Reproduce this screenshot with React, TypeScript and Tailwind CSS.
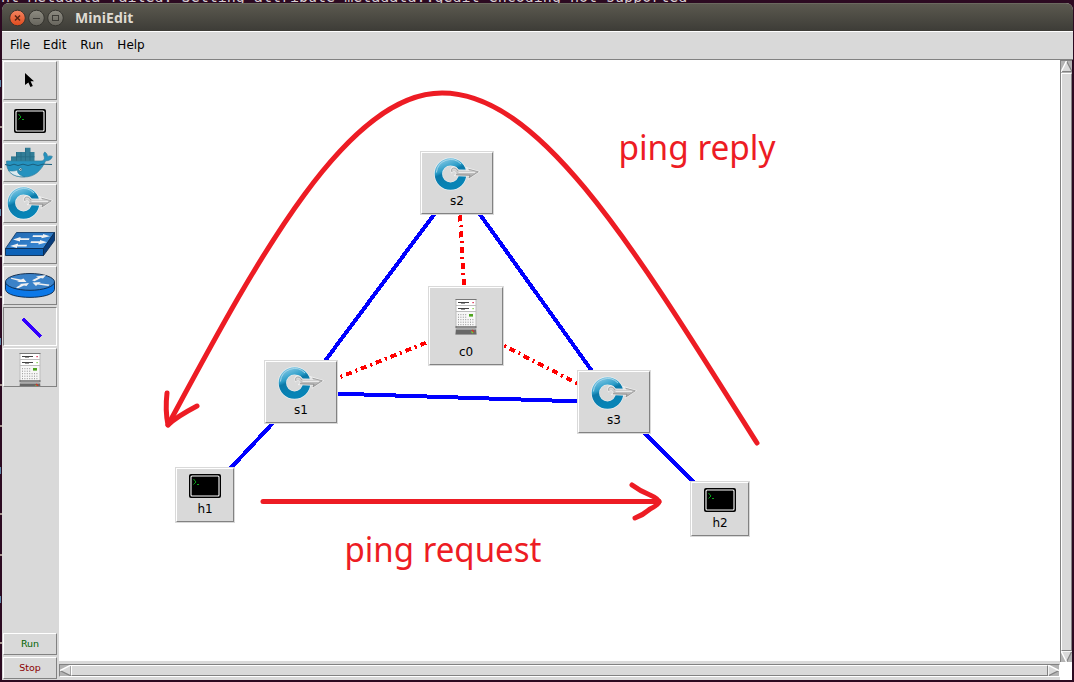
import React from 'react';

const raised = 'border border-t-white border-l-white border-r-[#828282] border-b-[#828282]';
const sunken = 'border border-t-[#828282] border-l-[#828282] border-r-white border-b-white';

function SwitchIcon() {
  return (
    <svg width="46" height="34" viewBox="0 0 46 34" className="block shrink-0">
      <defs>
        <linearGradient id="ring" x1="0" y1="0" x2="0.4" y2="1">
          <stop offset="0" stopColor="#7cc4e2" />
          <stop offset="0.38" stopColor="#2c9dc8" />
          <stop offset="0.5" stopColor="#0b79a9" />
          <stop offset="1" stopColor="#0784b6" />
        </linearGradient>
        <linearGradient id="silver" x1="0" y1="0" x2="0" y2="1">
          <stop offset="0" stopColor="#ececec" />
          <stop offset="0.5" stopColor="#c0c0c0" />
          <stop offset="1" stopColor="#979797" />
        </linearGradient>
      </defs>
      <circle cx="16.5" cy="17" r="12.2" fill="none" stroke="#e9eff1" strokeWidth="8.6" />
      <circle cx="16.5" cy="17" r="12.1" fill="none" stroke="url(#ring)" strokeWidth="7.4" />
      <path d="M2.4 15.5A14.3 14.3 0 0 1 27 7" fill="none" stroke="#a5d6e9" strokeWidth="1" />
      <path d="M17.5 16C14.5 9 21.5 7.5 24.5 13L35 13.2L32 10.5L45.5 14.6L34 22.3L35 19.2L20 18.6C24.5 16.8 20.5 12.5 17.5 16Z" fill="url(#silver)" stroke="#efefef" strokeWidth="1" strokeLinejoin="round" />
      <path d="M17.8 14.8C16.5 10 22 9.8 24 14M34.3 12.2L44.3 14.8L34.9 21L36 18.2L22 17.8" fill="none" stroke="#8c8c8c" strokeWidth="0.7" />
      <path d="M24.5 15.4L41 15.4" stroke="#f4f4f4" strokeWidth="0.9" />
    </svg>
  );
}

function HostIcon() {
  return (
    <svg width="32" height="24" viewBox="0 0 32 24" className="block shrink-0">
      <rect width="32" height="24" rx="2" fill="#000" />
      <rect x="2" y="2" width="28" height="20" rx="1" fill="none" stroke="#fff" strokeWidth="1.1" />
      <path d="M4.5 5L7 8L4.5 10.5M8 10.5H10" fill="none" stroke="#08a318" strokeWidth="1" />
    </svg>
  );
}

const vents = [15, 17.5, 20, 22.5, 25];

function ControllerIcon() {
  return (
    <svg width="22" height="36" viewBox="0 0 22 36" className="block shrink-0">
      <rect x="0.5" y="0" width="21" height="36" fill="#bdbdbd" />
      <path d="M0.5 0.5H21.5" stroke="#777" strokeWidth="1" />
      <rect x="1.5" y="1" width="19" height="5" fill="#fff" />
      <rect x="1.5" y="7" width="19" height="5" fill="#fff" />
      <rect x="1.5" y="13" width="19" height="15" fill="#f7f7f7" />
      <path d="M3 3.5H14M3 9.5H14" stroke="#444" strokeWidth="1" />
      <path d="M6 4.3H10M6 10.3H10" stroke="#444" strokeWidth="0.7" />
      <rect x="17.5" y="3" width="1.2" height="1.2" fill="#d00030" />
      <rect x="17.5" y="9" width="1.2" height="1.2" fill="#68c52d" />
      {vents.map((y) => (
        <path key={y} d={y < 19 ? `M3 ${y + 0.7}H12` : `M3 ${y + 0.7}H19`} stroke="#8f8f8f" strokeWidth="1" strokeDasharray="1 1.4" />
      ))}
      <rect x="14" y="15" width="4" height="2.6" fill="#4ea51f" />
      <path d="M0.5 28H21.5" stroke="#222" strokeWidth="1" />
      <path d="M1 30.5H21L21.5 35H0.5Z" fill="#686868" />
      <rect x="1.5" y="28.5" width="19" height="2" fill="#aaa" />
      <path d="M17 31L19 33" stroke="#d93025" strokeWidth="1.2" />
      <path d="M16.4 32.5L18 34" stroke="#7ccf2e" strokeWidth="1.2" />
      <path d="M0.5 35.5H21.5" stroke="#999" strokeWidth="1" />
    </svg>
  );
}

function CursorIcon() {
  return (
    <svg width="10" height="15" viewBox="0 0 10 15" className="block shrink-0">
      <path d="M0 0L9 8.2H5.6L7.8 13L5.4 14L3.4 9.5L0 12Z" fill="#000" />
    </svg>
  );
}

function DockerIcon() {
  return (
    <svg width="48" height="32" viewBox="0 0 48 32" className="block shrink-0">
      <path d="M6 10H11V5H20V0.8H25.5V5H29.5V14H6Z" fill="#317d97" />
      <path d="M11.5 5V14M16 5V14M20.5 1V14M25 5V14M6 9.8H29.5" stroke="#246a84" strokeWidth="0.8" />
      <path d="M1.5 14H36C39 14 40 12 39.2 9.5C38.4 7.5 38.5 6.5 39.8 5C42 6.5 42.5 8 42.3 9.5C44 8.8 46 8.8 47.3 9.5C46.5 12.5 44 13.8 40.6 13.8C36 24 29.5 30 19 30C8 30 1 25 1.5 14Z" fill="#2592bf" stroke="#2d7e9e" strokeWidth="0.7" />
      <path d="M3.5 23.5C7 24.5 10 24 12.5 23C12 26 14.5 28.5 19.5 29.7C11.5 30.3 6 27.5 3.5 23.5Z" fill="#dceaf0" stroke="#2d7e9e" strokeWidth="0.6" />
      <path d="M0 17.5L5 18.5L9 17.2L13 18.5L18 17.2L23 18.5L28 17.2L33 18.5L38 17.2L47 17.5" fill="none" stroke="#1b5f7c" strokeWidth="1" />
      <circle cx="15.5" cy="22.5" r="1.6" fill="#e6f2f6" stroke="#246d86" strokeWidth="0.7" />
      <circle cx="15.8" cy="22.6" r="0.7" fill="#123c4d" />
    </svg>
  );
}

function LegacySwitchIcon() {
  return (
    <svg width="50" height="24" viewBox="0 0 50 24" className="block shrink-0">
      <defs>
        <linearGradient id="slab" x1="0" y1="0" x2="1" y2="1">
          <stop offset="0" stopColor="#1f66ae" />
          <stop offset="1" stopColor="#3f8fdc" />
        </linearGradient>
      </defs>
      <path d="M11.5 0.5H49.5L38.5 16.5H0.5Z" fill="url(#slab)" stroke="#123c6b" strokeWidth="0.9" />
      <path d="M0.5 16.5H38.5V23.5H0.5Z" fill="#0c62b8" stroke="#0a2c52" strokeWidth="0.9" />
      <path d="M38.5 16.5L49.5 0.5V8.5L38.5 23.5Z" fill="#083c7c" stroke="#0a2c52" strokeWidth="0.9" />
      <path d="M28 3.2H38V1.9L45 4.2L36.5 6.3V4.9H27.5Z" fill="#f1f1f1" />
      <path d="M26 9.3H35V8L42 10.3L33.5 12.4V11H25.5Z" fill="#f1f1f1" />
      <path d="M24.5 6.3H15.5V5L8 7.4L15 9.5V8H24Z" fill="#f1f1f1" />
      <path d="M22 12.8H13V11.5L5 13.9L12 16V14.5H21.5Z" fill="#f1f1f1" />
    </svg>
  );
}

function RouterIcon() {
  return (
    <svg width="50" height="25" viewBox="0 0 50 25" className="block shrink-0">
      <path d="M0.5 9V16.5C2 27 48 27 49.5 16.5V9Z" fill="#0b78e8" stroke="#0a2545" strokeWidth="0.9" />
      <ellipse cx="25" cy="8.9" rx="24.5" ry="8.4" fill="#3b82c8" stroke="#0a2545" strokeWidth="0.9" />
      <path d="M6 4.8L16 6.4L18.5 5.4L21.5 9L12 9.1L14 7.9L6 5.8Z" fill="#f1f1f1" />
      <path d="M27 7.3L33 4.2L30.8 3.4L41 2L38 5.5L35.8 4.9L29.5 8.3Z" fill="#f1f1f1" />
      <path d="M27.5 9.4L36 9L34 10.2L44.5 11.5L43.5 12.9L32.5 11.6L31 13Z" fill="#f1f1f1" />
      <path d="M11 14.5L16 11.5L14 11L24 9.9L21.5 13L19 12.6L13 15.3Z" fill="#f1f1f1" />
    </svg>
  );
}

function LinkIcon() {
  return (
    <svg width="22" height="22" viewBox="0 0 22 22" className="block shrink-0" shapeRendering="crispEdges">
      <path d="M2 2L20 20" stroke="#3300ff" strokeWidth="3.4" />
    </svg>
  );
}

const tools = [
  { name: 'select', pad: 'pl-[21px] pt-[11px]', icon: <CursorIcon /> },
  { name: 'host', pad: 'pl-[10px] pt-[6px]', icon: <HostIcon /> },
  { name: 'docker', pad: 'pl-[1px] pt-[3px]', icon: <DockerIcon /> },
  { name: 'switch', pad: 'pl-[3px] pt-[1px]', icon: <SwitchIcon /> },
  { name: 'legacy-switch', pad: 'pl-[1px] pt-[6px]', icon: <LegacySwitchIcon /> },
  { name: 'legacy-router', pad: 'pl-[1px] pt-[6px]', icon: <RouterIcon /> },
  { name: 'link', pad: 'pl-[17px] pt-[9px]', icon: <LinkIcon />, active: true },
  { name: 'controller', pad: 'pl-[15px] pt-[4px]', icon: <ControllerIcon /> },
];

const nodes = [
  { id: 's2', box: 'left-[361px] top-[91px] h-[64px] w-[74px]', pad: 'pt-[4px]', icon: <SwitchIcon />, label: 'mt-px' },
  { id: 'c0', box: 'left-[369px] top-[226px] h-[80px] w-[76px]', pad: 'pt-[11px]', icon: <ControllerIcon />, label: 'mt-[8px]' },
  { id: 's1', box: 'left-[205px] top-[300px] h-[64px] w-[74px]', pad: 'pt-[4px]', icon: <SwitchIcon />, label: 'mt-px' },
  { id: 's3', box: 'left-[518px] top-[310px] h-[64px] w-[74px]', pad: 'pt-[4px]', icon: <SwitchIcon />, label: 'mt-px' },
  { id: 'h1', box: 'left-[116px] top-[407px] h-[56px] w-[60px]', pad: 'pt-[5px]', icon: <HostIcon />, label: 'mt-[2px]' },
  { id: 'h2', box: 'left-[631px] top-[421px] h-[56px] w-[60px]', pad: 'pt-[5px]', icon: <HostIcon />, label: 'mt-[2px]' },
];

function Topology() {
  return (
    <div className="relative h-[601px] w-[1001px] overflow-hidden bg-white">
      <svg width="1001" height="601" viewBox="59 60 1001 601" className="absolute inset-0" shapeRendering="crispEdges" fill="none">
        <g stroke="#0000ff" strokeWidth="4">
          <path d="M301.5 392.5L457.5 183L614.5 402.5Z" />
          <path d="M301.5 392.5L205.5 495M614.5 402.5L720 509" />
        </g>
        <g stroke="#ff0000" strokeWidth="4" strokeDasharray="6 4 2 4">
          <path d="M458.5 183.5L466 326" />
          <path d="M301.5 392.5L466.5 326.5" />
          <path d="M614.5 402.5L466.5 326.5" />
        </g>
      </svg>
      {nodes.map((n) => (
        <div key={n.id} className={`absolute bg-[#d9d9d9] p-px ${n.box}`}>
          <div className={`flex h-full w-full flex-col items-center ${raised} ${n.pad}`}>
            {n.icon}
            <span className={`text-[12px] leading-[18px] text-black ${n.label}`}>{n.id}</span>
          </div>
        </div>
      ))}
      <svg width="1001" height="601" viewBox="59 60 1001 601" className="absolute inset-0" fill="none">
        <g stroke="#ed1c24" strokeWidth="5" strokeLinecap="round" strokeLinejoin="round">
          <path d="M757 443C633 246 540 93 442 93C345 93 254 266 168 425" />
          <path d="M167 393Q165 410 168 425Q176 417 197 406" />
          <path d="M263 501.5H659" />
          <path d="M632 485Q640 491 650 495Q659 499 659 502Q658 505 650 509Q643 515 635 518" />
        </g>
        <g fill="#ed1c24" fontFamily="'Noto Sans', 'Open Sans', sans-serif" fontSize="34">
          <text x="618.500" y="160" textLength="157" lengthAdjust="spacingAndGlyphs">ping reply</text>
          <text x="344.500" y="562" textLength="197" lengthAdjust="spacingAndGlyphs">ping request</text>
        </g>
      </svg>
    </div>
  );
}

function Arrow({ dir }: { dir: 'up' | 'down' | 'left' | 'right' }) {
  const shape = { up: 'M5.5 0L11 11H0Z', down: 'M0 0H11L5.5 11Z', left: 'M0 5.5L11 0V11Z', right: 'M0 0L11 5.5L0 11Z' }[dir];
  const light = { up: 'M0 11L5.5 0', down: 'M5.5 11L0 0H11', left: 'M0 5.5L11 0', right: 'M0 11V0L11 5.5' }[dir];
  const dark = { up: 'M0 10.5H11L5.5 0', down: 'M11 0L5.5 11', left: 'M0 5.5L11 11V0', right: 'M0 11L11 5.5' }[dir];
  return (
    <svg width="11" height="11" viewBox="0 0 11 11" className="block shrink-0">
      <path d={shape} fill="#d9d9d9" />
      <path d={dark} fill="none" stroke="#828282" strokeWidth="1.2" />
      <path d={light} fill="none" stroke="#fff" strokeWidth="1.4" />
    </svg>
  );
}

export default function App() {
  return (
    <div className="relative flex h-[682px] w-[1074px] overflow-hidden bg-[#2c0a21] pl-[2px] pt-[3px] font-['DejaVu_Sans','Liberation_Sans',sans-serif]">
      <div className="absolute left-px top-[-12px] whitespace-pre font-['DejaVu_Sans_Mono',monospace] text-[15px] leading-[18px] text-[#d6ccd2]">
        nt Metadata failed: Setting attribute metadata::gedit-encoding not supported
      </div>
      <div className="absolute left-0 top-[62px] flex h-[600px] w-[2px] flex-col justify-between py-[18px]">
        {Array.from({ length: 14 }, (_, i) => (
          <span key={i} className={i % 3 === 0 ? 'h-[7px] w-px bg-[#5c86a8]' : 'h-[2px] w-[2px] bg-[#a89690]'} />
        ))}
      </div>
      <div className="relative flex h-[677px] w-[1071px] flex-col overflow-hidden rounded-t-[7px] bg-[#d9d9d9]">
        <header className="flex h-[28px] shrink-0 items-center border-t border-[#6b695f] bg-linear-to-b from-[#5b594f] to-[#3d3c37] pl-[7px]">
          <svg width="56" height="18" viewBox="0 0 56 18" className="block">
            <defs>
              <linearGradient id="gray" x1="0" y1="0" x2="0" y2="1">
                <stop offset="0" stopColor="#8e8c82" />
                <stop offset="1" stopColor="#66645c" />
              </linearGradient>
              <linearGradient id="close" x1="0" y1="0" x2="0" y2="1">
                <stop offset="0" stopColor="#f58562" />
                <stop offset="1" stopColor="#df4a1c" />
              </linearGradient>
            </defs>
            <circle cx="8.5" cy="9" r="7.8" fill="url(#close)" stroke="#3a352f" />
            <circle cx="27.5" cy="9" r="7.8" fill="url(#gray)" stroke="#35342f" />
            <circle cx="46.5" cy="9" r="7.8" fill="url(#gray)" stroke="#35342f" />
            <path d="M6 6.5L11 11.5M11 6.5L6 11.5" stroke="#5a2413" strokeWidth="1.5" />
            <path d="M24 9.5H31" stroke="#3c3b36" />
            <rect x="43.5" y="6.5" width="6" height="5" fill="none" stroke="#3c3b36" />
          </svg>
          <h1 className="ml-[10px] font-['Noto_Sans',sans-serif] text-[14px] font-bold leading-none tracking-[0.1px] text-[#dfdbd2]">MiniEdit</h1>
        </header>
        <nav className="flex h-[29px] shrink-0 items-center gap-[13px] border-b border-t border-b-[#828282] border-t-white pb-[2px] pl-[8px] text-[12px] text-black">
          <span>File</span>
          <span>Edit</span>
          <span className="ml-px">Run</span>
          <span className="ml-px">Help</span>
        </nav>
        <div className="flex min-h-0 flex-1">
          <aside className="flex w-[57px] shrink-0 flex-col gap-[2px] border-t border-white/60 pb-px pl-px">
            {tools.map((t) => (
              <div key={t.name} className={`h-[39px] w-[54px] shrink-0 overflow-hidden ${t.active ? sunken : raised} ${t.pad}`}>
                {t.icon}
              </div>
            ))}
            <div className="flex-1" />
            <button className={`h-[22px] w-[54px] shrink-0 text-[9.5px] leading-[20px] text-[#006400] ${raised}`}>Run</button>
            <button className={`h-[22px] w-[54px] shrink-0 text-[9.5px] leading-[20px] text-[#8b0000] ${raised}`}>Stop</button>
          </aside>
          <div className="flex w-[1001px] shrink-0 flex-col">
            <Topology />
            <div className="mt-[3px] flex h-[13px] w-[1001px] items-center border border-b-white border-l-[#828282] border-r-white border-t-[#828282] bg-[#b3b3b3]">
              <Arrow dir="left" />
              <div className={`h-[11px] flex-1 bg-[#d9d9d9] ${raised}`} />
              <Arrow dir="right" />
            </div>
          </div>
          <div className="flex w-[12px] flex-col bg-white">
            <div className="flex h-[602px] flex-col items-center border-l border-t border-[#828282] bg-[#b3b3b3]">
              <Arrow dir="up" />
              <div className={`mt-px w-[11px] flex-1 bg-[#d9d9d9] ${raised}`} />
              <Arrow dir="down" />
            </div>
          </div>
          <div className="flex-1 bg-[#2c0a21]" />
        </div>
      </div>
    </div>
  );
}
